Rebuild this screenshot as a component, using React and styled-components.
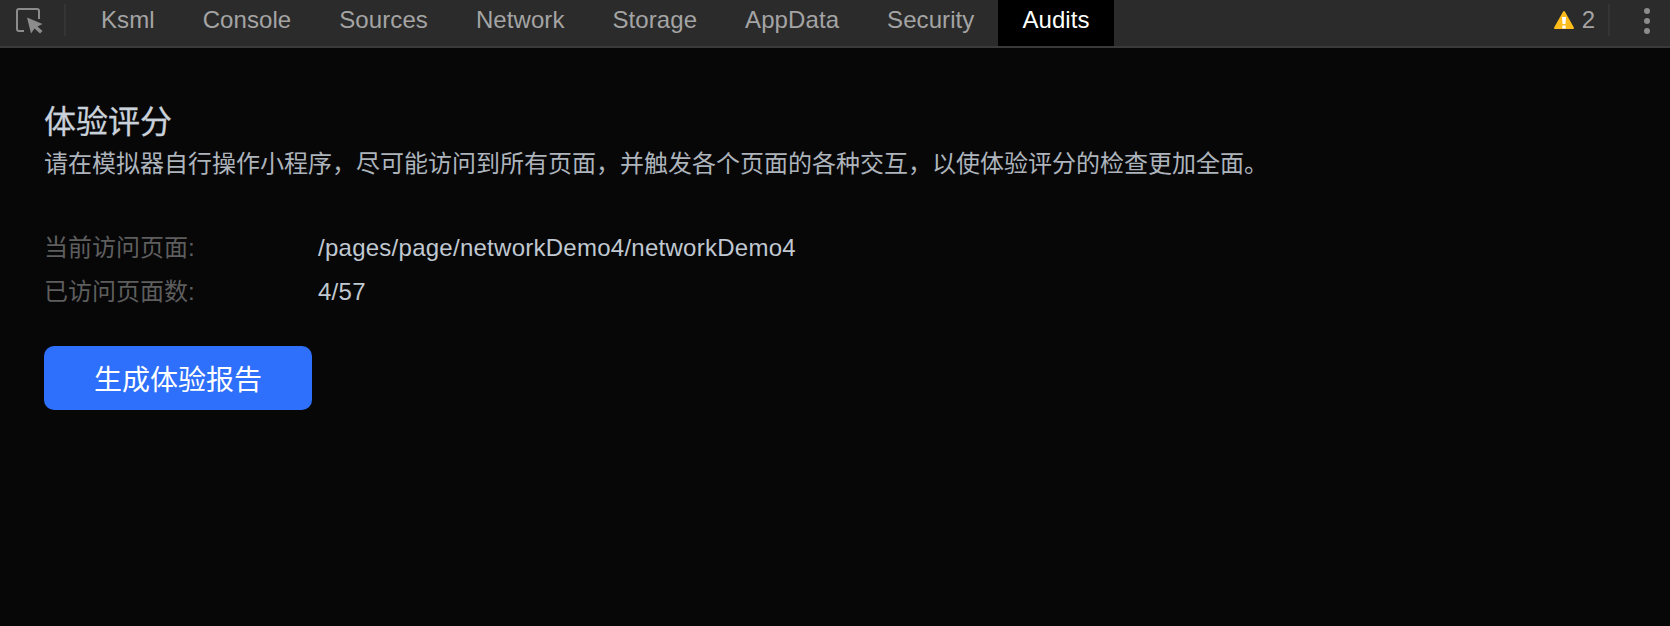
import React from "react";
import styled, { createGlobalStyle } from "styled-components";

const Global = createGlobalStyle`
  html, body { margin: 0; padding: 0; height: 100%; background: #070708; }
  #root { height: 100%; }
  * { box-sizing: border-box; }
`;
const FONT = `"Liberation Sans", "Noto Sans CJK SC", sans-serif`;

const Page = styled.div`
  width: 1670px; height: 626px; background: #070708; font-family: ${FONT};
  overflow: hidden; display: flex; flex-direction: column;
`;
const Toolbar = styled.header`
  height: 48px; flex: none; display: flex; align-items: flex-start;
  background: #2b2b2b; border-bottom: 2px solid #3a3a3a;
`;
const InspectButton = styled.div`
  width: 64px; height: 46px; flex: none; padding: 7px 0 0 16px;
`;
const Separator = styled.div`
  width: 2px; height: 32px; margin-top: 4px; flex: none; background: #353535;
`;
const Tabs = styled.nav`
  display: flex; margin-left: 11px; height: 46px;
`;
const Tab = styled.div`
  height: 46px; padding: ${p => (p.$active ? "0 24.5px 0 24px" : "0 24px")}; font-size: 24px; line-height: 40px; letter-spacing: 0.08px;
  color: ${p => (p.$active ? "#ffffff" : "#a4a4a4")};
  background: ${p => (p.$active ? "#000000" : "transparent")};
`;
const Right = styled.div`
  margin-left: auto; display: flex; align-items: flex-start; height: 46px;
`;
const WarnCount = styled.div`
  display: flex; align-items: center; height: 40px; gap: 8px;
  font-size: 24px; color: #a4a4a4; margin-right: 13px;
`;
const Dots = styled.div`
  width: 60px; height: 46px; display: flex; flex-direction: column; align-items: center; gap: 4px; padding: 8px 0 0 14px;
`;
const Dot = styled.span`
  width: 6px; height: 6px; border-radius: 50%; background: #8c8c8c;
`;
const Content = styled.main`
  flex: 1; padding: 54px 44px 0;
`;
const Title = styled.h1`
  margin: 0; font-size: 32px; font-weight: 400; line-height: 40px; color: #c9d1da;
  -webkit-text-stroke: 0.3px #c9d1da;
`;
const Description = styled.p`
  margin: 2px 0 42px; font-size: 24px; line-height: 40px; color: #adb4bc;
`;
const InfoRow = styled.div`
  display: flex; height: 44px; line-height: 44px; font-size: 24px; letter-spacing: 0.26px;
`;
const Label = styled.span`
  width: 274px; flex: none; color: #5e5e5e; letter-spacing: 0;
`;
const Value = styled.span`
  color: #c0c8d1;
`;
const PrimaryButton = styled.button`
  display: block; width: 268px; height: 64px; margin-top: 32px; padding: 0; border: 0; border-radius: 10px;
  background: #2e6ffb; color: #fff; font-family: ${FONT}; font-size: 28px;
`;

const InspectIcon = () => (
  <svg width="28" height="28" viewBox="0 0 28 28" fill="none" style={{ display: "block" }}>
    <path d="M8 24H3a2 2 0 0 1-2-2V4a2 2 0 0 1 2-2H21a2 2 0 0 1 2 2V12" stroke="#8c8c8c" strokeWidth="2" />
    <path d="M11 10.500L26.500 17L21.500 19.500L26.500 24L24 26.500L18.500 21.500L15 26.500Z" fill="#8c8c8c" />
  </svg>
);
const WarningIcon = () => (
  <svg width="20" height="20" viewBox="0 0 20 20" style={{ display: "block" }}>
    <path d="M10 2L19 18H1Z" fill="#fbbc1c" stroke="#fbbc1c" strokeWidth="2" strokeLinejoin="round" />
    <path d="M8 7H12L11.500 14H8.500Z" fill="#fff" />
    <rect x="8.300" y="15.500" width="3.400" height="3" fill="#fff" />
  </svg>
);

const TABS = ["Ksml", "Console", "Sources", "Network", "Storage", "AppData", "Security", "Audits"];

export default function App() {
  return (
    <Page>
      <Global />
      <Toolbar>
        <InspectButton><InspectIcon /></InspectButton>
        <Separator />
        <Tabs>
          {TABS.map(t => <Tab key={t} $active={t === "Audits"}>{t}</Tab>)}
        </Tabs>
        <Right>
          <WarnCount><WarningIcon /><span>2</span></WarnCount>
          <Separator />
          <Dots><Dot /><Dot /><Dot /></Dots>
        </Right>
      </Toolbar>
      <Content>
        <Title>体验评分</Title>
        <Description>请在模拟器自行操作小程序，尽可能访问到所有页面，并触发各个页面的各种交互，以使体验评分的检查更加全面。</Description>
        <InfoRow><Label>当前访问页面:</Label><Value>/pages/page/networkDemo4/networkDemo4</Value></InfoRow>
        <InfoRow><Label>已访问页面数:</Label><Value>4/57</Value></InfoRow>
        <PrimaryButton>生成体验报告</PrimaryButton>
      </Content>
    </Page>
  );
}
